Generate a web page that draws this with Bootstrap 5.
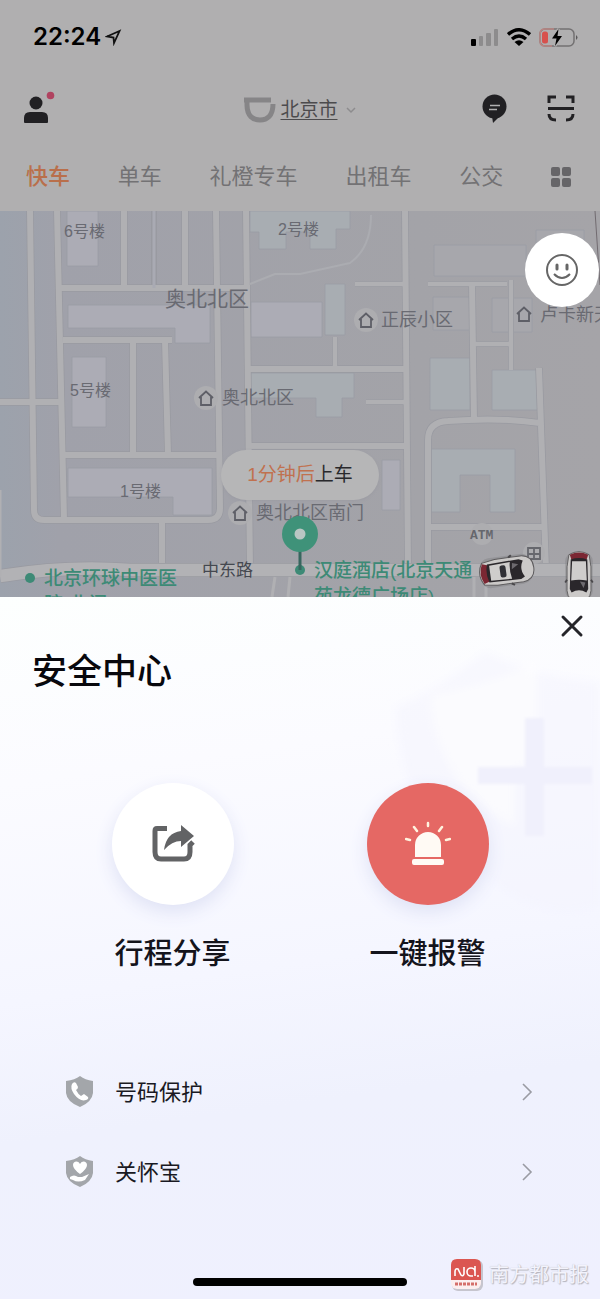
<!DOCTYPE html>
<html lang="zh-CN">
<head>
<meta charset="utf-8">
<meta name="viewport" content="width=device-width, initial-scale=1">
<title>安全中心</title>
<link href="https://cdn.jsdelivr.net/npm/bootstrap@5.3.0/dist/css/bootstrap.min.css" rel="stylesheet">
<style>
  body { font-family: "Liberation Sans", "Noto Sans CJK SC", sans-serif; color: #14141c; background: #eff0fe; }
  svg { display: block; flex: none; }
  button { padding: 0; border: 0; background: none; color: inherit; }
  .app-head { background: #b0afb0; }
  .status-bar { height: 74px; padding: 0 22px 0 33px; color: #000; }
  .clock { font: 600 24px/28px Inter, sans-serif; }
  .tool-bar { height: 68px; padding: 0 25px 0 23px; display: grid; grid-template-columns: 1fr auto 1fr; align-items: center; color: #212023; }
  .city-link { padding: 4px 0 0 6px; }
  .city { font-size: 19px; line-height: 24px; color: #4c4b4d; text-underline-offset: 3px; }
  .service-tabs { height: 69px; padding: 0 29px 0 26px; }
  .service-tabs a { font-size: 22px; line-height: 28px; color: #737274; text-decoration: none; white-space: nowrap; }
  .service-tabs a.current { color: #b96f4b; font-weight: 500; }
  .map-view svg.city-map { width: 100%; height: auto; }
  .city-map text { fill: #696a72; font-size: 18px; }
  .city-map .t-sm { font-size: 16px; }
  .city-map .t-lg { font-size: 21px; }
  .city-map .t-road { fill: #454850; font-size: 17px; }
  .city-map .t-poi { fill: #3d8a76; font-size: 19px; font-weight: 500; }
  .city-map .t-atm { font: 700 13px "Liberation Mono", monospace; fill: #66676d; }
  .pickup { left: 50%; top: 239px; margin-left: -79px; width: 158px; height: 50px; border-radius: 25px; background: #b6b6b7; font-size: 19px; color: #29292c; box-shadow: 0 1px 3px #90909855; white-space: nowrap; }
  .pickup b { font-weight: 400; color: #c0714f; }
  .smile { right: 1px; top: 22px; width: 74px; height: 74px; border-radius: 50%; background: #fff; }
  .sheet { background: linear-gradient(172deg, #fdfffe 0%, #fbfbff 24%, #f5f6ff 52%, #eff1fd 70%, #eff0fe 100%); overflow: hidden; }
  .shield-art { right: 0; top: 30px; }
  .close-btn { padding: 16px 16px 0 0; }
  .sheet-title { font-size: 35px; line-height: 44px; font-weight: 500; color: #08080d; padding: 12px 32px 0; margin-bottom: 89px; }
  .actions { padding: 0 45px; }
  .action { font-size: 29px; line-height: 40px; font-weight: 500; white-space: nowrap; }
  .disc { width: 122px; height: 122px; border-radius: 50%; margin-bottom: 29px; background: #fff; box-shadow: 0 7px 18px #dfe2f5; }
  .disc.alarm { background: #e56864; }
  .options { padding: 78px 66px 0 65px; }
  .options a { height: 80px; font-size: 22px; color: #191922; text-decoration: none; }
  .foot { display: grid; grid-template-columns: 1fr auto 1fr; align-items: center; padding: 47px 11px 5px; }
  .home-bar { width: 214px; height: 8px; border-radius: 4px; background: #000; margin-top: 14px; }
  .source { font-size: 20px; color: #f3f3fc; text-shadow: 1px 1px 1px #b4b4bd, 0 0 1px #bcbcc5; white-space: nowrap; }
</style>
</head>
<body>
<header class="app-head">
  <div class="status-bar d-flex align-items-center justify-content-between">
    <div class="d-flex align-items-center gap-1">
      <span class="clock">22:24</span>
      <svg width="17" height="17" viewBox="0 0 17 17" fill="none" stroke="#111" stroke-width="1.800" stroke-linejoin="miter"><path d="M2 7.500 14.500 2 9 14 8.500 8.500Z"/></svg>
    </div>
    <div class="d-flex align-items-center gap-2">
      <svg width="29" height="18" viewBox="0 0 29 18"><rect x="1" y="11" width="5" height="7" rx="1"/><g fill="#8d8c8d"><rect x="9" y="8" width="4" height="10" rx="1"/><rect x="16" y="5" width="5" height="13" rx="1"/><rect x="24" y="1" width="4" height="17" rx="1"/></g></svg>
      <svg width="24" height="18" viewBox="0 0 24 18" fill="none" stroke="#000" stroke-width="3.400"><path d="M1 6.500Q12-3 23 6.500M5 11Q12 5 19 11"/><path d="M12 18 7.500 14Q12 10.500 16.500 14Z" fill="#000" stroke="none"/></svg>
      <svg width="39" height="19" viewBox="0 0 39 19"><rect x="1" y="1" width="34" height="17" rx="5" fill="none" stroke="#737172" stroke-width="1.500"/><path d="M15 1H6Q1 1 1 6v7q0 5 5 5h7" fill="none" stroke="#bb8582" stroke-width="1.500"/><path d="M37 7q3 2.500 0 5z" fill="#5b595a"/><rect x="3" y="3.500" width="6" height="12" rx="2.500" fill="#d7514d"/><path d="M19.500 1 13 10.500h4.500L16 18l7-10h-4.500z" stroke="#b0afb0" stroke-width="2.500" paint-order="stroke"/></svg>
    </div>
  </div>
  <div class="tool-bar">
    <button type="button" aria-label="个人中心" class="text-start"><svg width="34" height="36" viewBox="0 0 34 36"><circle cx="13" cy="13" r="6.500" fill="#212023"/><path d="M1 32v-4q0-6 6-6h12q6 0 6 6v4q0 1-1 1H2q-1 0-1-1Z" fill="#212023"/><circle cx="27.500" cy="5.500" r="3.800" fill="#b04360"/></svg></button>
    <a href="#" class="city-link d-flex align-items-center gap-1 text-decoration-none">
      <svg width="32" height="28" viewBox="0 0 32 28" fill="none" stroke="#868587" stroke-width="5"><path d="M0 4H27M3 4V9C3 20 9 24 16 24S29 20 29 8"/></svg>
      <span class="city text-decoration-underline">北京市</span>
      <svg width="18" height="10" viewBox="0 0 18 10" fill="none" stroke="#8d8c8e" stroke-width="1.500"><path d="m5 3 4 4 4-4"/></svg>
    </a>
    <div class="d-flex justify-content-end align-items-center gap-4">
      <button type="button" aria-label="消息" class="me-3"><svg width="25" height="29" viewBox="0 0 25 29"><circle cx="12.500" cy="12.500" r="12" fill="#212023"/><path d="M10 22h8l-7 7z" fill="#212023"/><path d="M8 11.500h10M7 15.500h8" stroke="#b0afb0" stroke-width="1.600"/></svg></button>
      <button type="button" aria-label="扫一扫"><svg width="28" height="27" viewBox="0 0 28 27" fill="none" stroke="#212023" stroke-width="3"><path d="M2 8V2h7M19 2h7v6M2 19q0 6 7 6M19 25q7 0 7-6M1 13.500h26"/></svg></button>
    </div>
  </div>
  <nav class="service-tabs d-flex align-items-center justify-content-between">
    <a href="#" class="current">快车</a><a href="#">单车</a><a href="#">礼橙专车</a><a href="#">出租车</a><a href="#">公交</a>
    <button type="button" aria-label="全部服务"><svg width="20" height="20" viewBox="0 0 20 20" fill="#666568"><rect width="9" height="9" rx="2"/><rect x="11" width="9" height="9" rx="2"/><rect y="11" width="9" height="9" rx="2"/><rect x="11" y="11" width="9" height="9" rx="2"/></svg></button>
  </nav>
</header>

<main>
<section class="map-view position-relative" aria-label="地图">
  <svg class="city-map" viewBox="0 211 600 386">
    <defs>
      <linearGradient id="land"><stop offset="0" stop-color="#9ca2ac"/><stop offset=".1" stop-color="#a0a1aa"/><stop offset=".7" stop-color="#a3a3a8"/><stop offset="1" stop-color="#a5a4a8"/></linearGradient>
      <path id="house" d="M-7 0 0-6.500 7 0M-5-1V7H5V-1" fill="none" stroke="#5e5f67" stroke-width="1.800"/>
    </defs>
    <rect y="211" width="600" height="386" fill="url(#land)"/>
    <!-- buildings -->
    <g fill="#acacb5" stroke="#9a9ca4" stroke-width=".8">
      <path d="M67 211h31v55H67zM68 305h142v38h-35v-15H68zM72 357h34v70H72zM68 468h144v47h-39v-18H68zM251 302h71v35h-71zM382 460h18v50h-18z"/>
      <g fill="#a8adb2"><path d="M250 211h100v18h-14v20h-26v-17h-24v17h-27v-17h-9zM325 284h20v51h-20zM250 373h104v25h-12v19h-26v-19h-66zM430 358h40v52h-40zM492 370h46v40h-46zM431 449h84v63h-25v-37h-30v37h-29z"/></g>
      <g fill="#a7a7ac"><path d="M434 245h92v31h-92zM433 297h41v33h-41zM492 298h40v34h-40zM536 230h48v28h-48z"/></g>
    </g>
    <!-- streets: dark edge first, light surface above it -->
    <g fill="none" stroke-linejoin="round">
      <g stroke="#999aa1" stroke-width="7.500">
        <path d="M30 211 34 510Q34 520 44 520H208Q220 520 220 508L216 211M57 211 64 520M60 288H250M124 211V288M185 211V288M246 211 250 570M63 340H172M133 340V455M165 340 168 455M64 455H220M0 402H62M162 520V570M405 211 408 570M428 570V440Q428 422 448 421Q500 417 540 423M250 369H408M472 283 474 420M539 368 546 570M430 527H545M250 446H408"/>
        <path stroke-width="6" d="M154 211V288M335 337V369M355 284H405M428 284H507M474 344H510M511 280V370M366 402H408"/>
      </g>
      <g stroke="#b0b0b3" stroke-width="6">
        <path d="M30 211 34 510Q34 520 44 520H208Q220 520 220 508L216 211M57 211 64 520M60 288H250M124 211V288M185 211V288M246 211 250 570M63 340H172M133 340V455M165 340 168 455M64 455H220M0 402H62M162 520V570M405 211 408 570M428 570V440Q428 422 448 421Q500 417 540 423M250 369H408M472 283 474 420M539 368 546 570M430 527H545M250 446H408"/>
        <path stroke-width="4.500" d="M335 337V369M355 284H405M428 284H507M474 344H510M511 280V370M366 402H408"/>
        <path stroke-width="3" stroke="#a9aab3" d="M154 211V288"/>
      </g>
      <path d="M250 284 275 274H300L350 263Q371 248 371 215" stroke="#abacb1" stroke-width="2"/>
      <path d="M0 576Q70 565 130 570H600" stroke="#999aa1" stroke-width="14"/>
      <path d="M0 576Q70 565 130 570H600" stroke="#b2b2b5" stroke-width="12.500"/>
      <path d="M0 490V576M275 577 272 597M290 577 288 597M474 577V597M486 577V597" stroke="#b0b0b3" stroke-width="3"/>
      <path d="M595 211 600 285" stroke="#716b70"/>
    </g>
    <!-- place names -->
    <text class="t-sm" x="64" y="237">6号楼</text>
    <text class="t-sm" x="278" y="235">2号楼</text>
    <text class="t-sm" x="70" y="396">5号楼</text>
    <text class="t-sm" x="120" y="497">1号楼</text>
    <text class="t-lg" x="165" y="306">奥北北区</text>
    <g fill="#adadb0"><circle cx="206" cy="398" r="12"/><circle cx="366" cy="320" r="12"/><circle cx="240" cy="513" r="12"/><circle cx="482" cy="534" r="11"/><circle cx="534" cy="553" r="11"/></g>
    <use href="#house" x="206" y="398"/><text x="222" y="404">奥北北区</text>
    <use href="#house" x="366" y="320"/><text x="381" y="326">正辰小区</text>
    <use href="#house" x="524" y="314"/><text x="540" y="321">卢卡新天</text>
    <use href="#house" x="240" y="513"/><text x="256" y="519">奥北北区南门</text>
    <text class="t-atm" x="470" y="539">ATM</text>
    <path d="M528 548h12v11h-12zM534 548v11M528 554h12" fill="none" stroke="#66676d" stroke-width="1.800"/>
    <text class="t-road" x="202" y="576">中东路</text>
    <circle cx="30" cy="578" r="5" fill="#3d8a76"/>
    <text class="t-poi" x="44" y="585">北京环球中医医</text>
    <text class="t-poi" x="44" y="611">院-北门</text>
    <text class="t-poi" x="314" y="577">汉庭酒店(北京天通</text>
    <text class="t-poi" x="314" y="603">苑龙德广场店)</text>
    <!-- pickup pin -->
    <circle cx="300" cy="570" r="5" fill="#3d8a76"/><path d="M300 548v22" stroke="#37665e" stroke-width="3"/>
    <circle cx="300" cy="534" r="18" fill="#3f9279"/><circle cx="300" cy="534" r="5.500" fill="#bac6c3"/>
    <!-- cars, nose towards +y -->
    <defs><g id="car">
      <rect x="-15" y="-26" width="30" height="52" rx="10" fill="#77777b" opacity=".35"/>
      <path d="M-11-23Q0-30 11-23L13-10V16Q12 28 0 28T-13 16V-10Z" fill="#cbc9c8" stroke="#5d5b5d"/>
      <path d="M-10-23Q0-28 10-23L8-17Q0-20-8-17Z" fill="#7b2733"/>
      <path d="M-9-18Q0-21 9-18L10 14 8 18Q0 13-8 18L-10 14Z" fill="#2a272b"/>
      <path d="M-7.500-16H7.500L8.500 5Q0 3-8.500 5Z" fill="#cfcdcc"/>
      <path d="M1 6 7 7 5 13Z" fill="#6d6a6f"/>
      <path d="M-13 4-15 7M13 4 15 7" stroke="#4a484b" stroke-width="2"/>
    </g></defs>
    <use href="#car" transform="translate(579 576) scale(.92)"/>
    <g transform="translate(506 571) rotate(-98)"><use href="#car"/><rect x="-6" y="-6" width="12" height="6" rx="2" fill="#303036"/></g>
  </svg>
  <div class="pickup position-absolute d-flex align-items-center justify-content-center"><b>1分钟后</b>上车</div>
  <button type="button" aria-label="表情" class="smile position-absolute d-flex align-items-center justify-content-center">
    <svg width="34" height="34" viewBox="0 0 34 34" fill="none" stroke="#666" stroke-width="2"><circle cx="17" cy="17" r="15"/><path d="M9 21q8 8 16 0"/><path d="M12 12v4M22 12v4" stroke-width="3" stroke-linecap="round"/></svg>
  </button>
</section>

<section class="sheet position-relative" aria-labelledby="sheet-title">
  <svg class="shield-art position-absolute" width="215" height="290" viewBox="0 0 215 290">
    <defs><filter id="soft"><feGaussianBlur stdDeviation="5"/></filter><filter id="softer"><feGaussianBlur stdDeviation="1.500"/></filter></defs>
    <g filter="url(#soft)"><path d="M10 80Q50 65 100 25Q150 50 215 55V280Q160 300 100 250Q15 190 10 80Z" fill="#f3f3fd" opacity=".5"/><path d="M46 68Q100 60 152 35V140H130V200Q50 160 46 68Z" fill="#fff" opacity=".65"/></g>
    <path filter="url(#softer)" d="M140 91h19v49h48v17h-48v52h-19v-52H93v-17h47z" fill="#f0f0fc"/>
  </svg>
  <div class="position-relative">
    <div class="d-flex justify-content-end close-btn"><button type="button" aria-label="关闭"><svg width="24" height="25" viewBox="0 0 24 25" stroke="#25252a" stroke-width="3" stroke-linecap="round"><path d="m3 4 18 18M21 4 3 22"/></svg></button></div>
    <h1 class="sheet-title" id="sheet-title">安全中心</h1>
    <div class="actions row g-0 text-center">
      <div class="col-6"><button type="button" class="action"><span class="disc d-flex align-items-center justify-content-center mx-auto">
        <svg width="44" height="38" viewBox="0 0 44 38"><path d="M16 3.500H6Q4 3.500 4 6V27Q4 34 10 34H33Q39 34 39 27V20L42 17" fill="none" stroke="#626365" stroke-width="5"/><path d="M13 25Q15 8 30 6V0L43 11 30 22V16Q21 16 13 25Z" fill="#626365" stroke="#fff" stroke-width="2" paint-order="stroke"/></svg></span>行程分享</button></div>
      <div class="col-6"><button type="button" class="action"><span class="disc alarm d-flex align-items-center justify-content-center mx-auto">
        <svg width="46" height="46" viewBox="0 0 46 46" fill="#fffaf4"><path d="M10 36V24a13 13 0 0 1 26 0v12zM9 38h28q2 0 2 2v2q0 2-2 2H9q-2 0-2-2v-2q0-2 2-2Z"/><path d="M23 2v3M9 6l3 4M37 6l-3 4M1 18l4 1M45 18l-4 1" stroke="#fff3df" stroke-width="2.500" stroke-linecap="round"/></svg></span>一键报警</button></div>
    </div>
    <nav class="options">
      <a href="#" class="d-flex align-items-center"><svg width="30" height="34" viewBox="0 0 30 34"><path d="M15 1Q20 5 28 6V18Q27 27 15 32Q2 27 1 18V6Q10 5 15 1Z" fill="#a3a6aa"/><path d="M7 9q2-3 4-1l2 4q0 2-2 3 2 4 5 6l3-2 4 3q1 2-2 3Q15 27 9 19 5 13 7 9Z" fill="#fff"/></svg><span class="ms-3 ps-1 flex-grow-1">号码保护</span><svg width="14" height="20" viewBox="0 0 14 20" fill="none" stroke="#9a9ba3" stroke-width="1.600"><path d="m3 2 8 8-8 8"/></svg></a>
      <a href="#" class="d-flex align-items-center"><svg width="30" height="34" viewBox="0 0 30 34"><path d="M15 1Q20 5 28 6V18Q27 27 15 32Q2 27 1 18V6Q10 5 15 1Z" fill="#a3a6aa"/><path d="M15 19Q8 14 8 10C8 6 13 5 15 9 17 5 22 6 22 10Q22 14 15 19ZM5 22Q9 19 13 22H17L24 19 20 25Q13 28 8 25L5 24Z" fill="#fff"/></svg><span class="ms-3 ps-1 flex-grow-1">关怀宝</span><svg width="14" height="20" viewBox="0 0 14 20" fill="none" stroke="#9a9ba3" stroke-width="1.600"><path d="m3 2 8 8-8 8"/></svg></a>
    </nav>
    <footer class="foot">
      <span></span><span class="home-bar"></span>
      <div class="source d-flex align-items-center justify-content-end gap-1"><svg width="34" height="32" viewBox="0 0 34 32"><rect x="1" y="1" width="31" height="31" rx="6" fill="#c6c5ce"/><rect width="30" height="30" rx="6" fill="#fbeeef"/><path d="M0 21V6q0-6 6-6h18q6 0 6 6v15z" fill="#db5651"/><path d="M4 17V13q0-4 3-3l3 6q2 2 3-1V8M24 7v10M24 13a4 4 0 1 0-4 4h2" fill="none" stroke="#fff" stroke-width="1.600"/><circle cx="27" cy="17" r="1" fill="#fff"/><path d="M4 25h22" stroke="#d46e6a" stroke-width="3" stroke-dasharray="3 1"/></svg>南方都市报</div>
    </footer>
  </div>
</section>
</main>
<script src="https://cdn.jsdelivr.net/npm/bootstrap@5.3.0/dist/js/bootstrap.bundle.min.js"></script>
</body>
</html>
